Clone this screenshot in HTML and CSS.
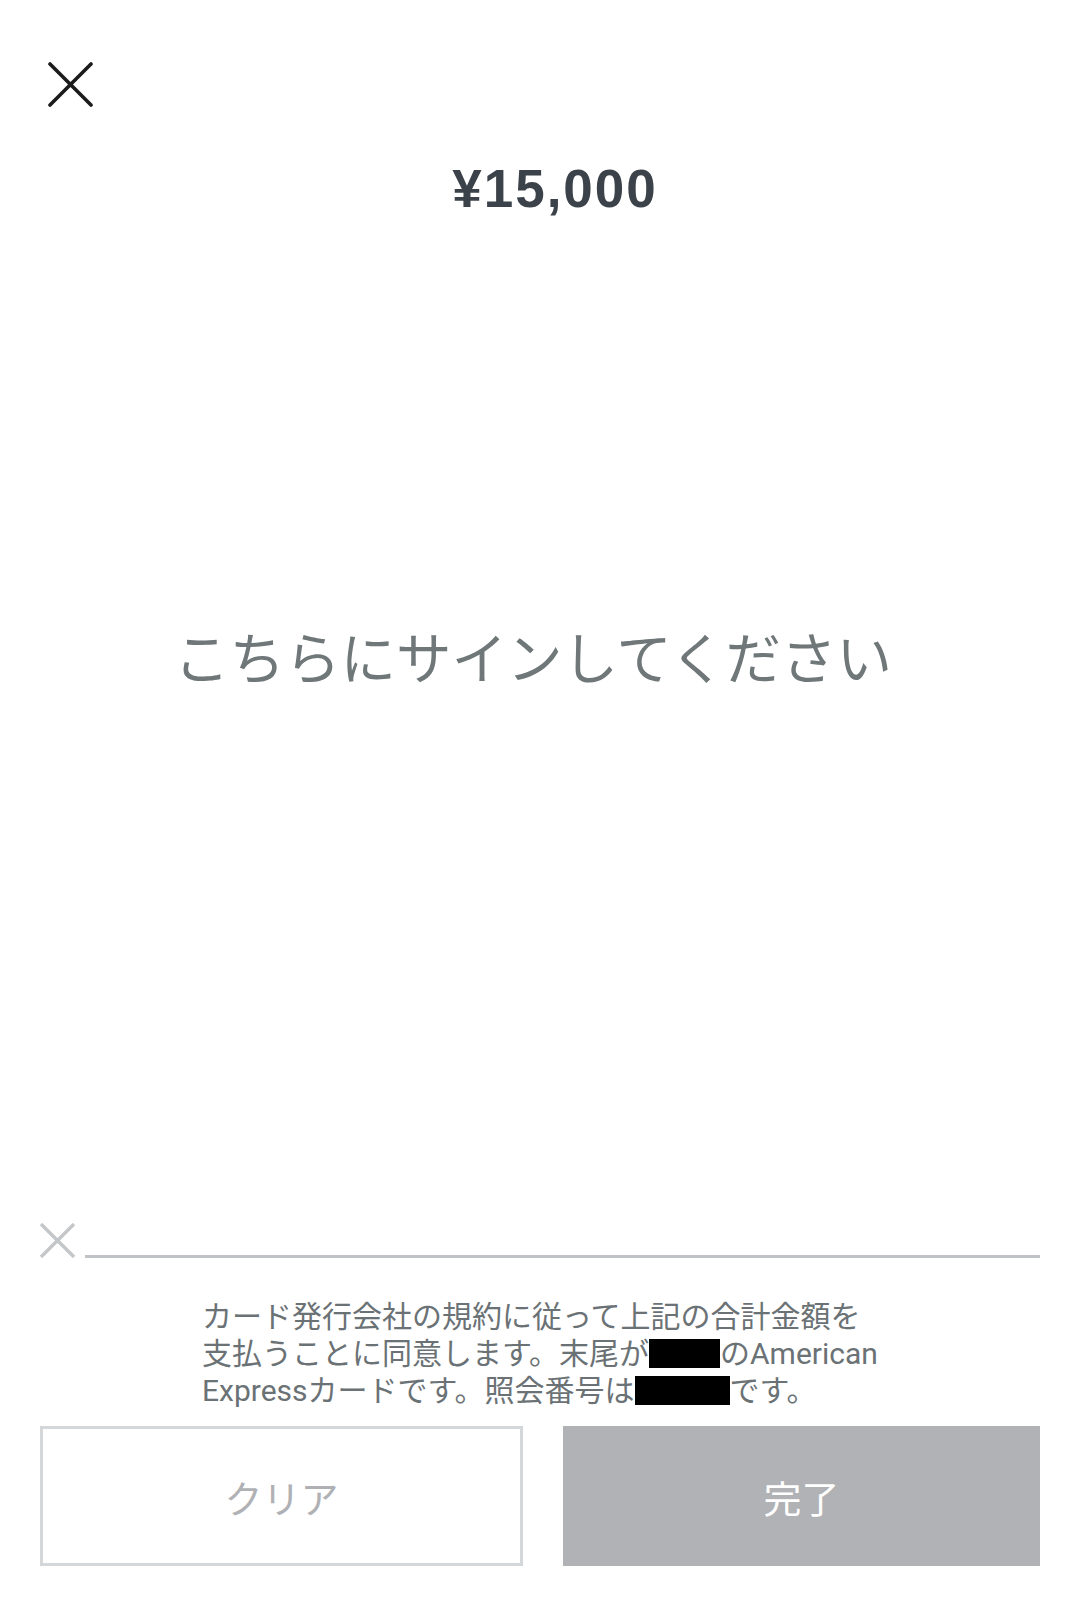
FILE: index.html
```html
<!DOCTYPE html>
<html lang="ja">
<head>
<meta charset="utf-8">
<title>サイン</title>
<link rel="stylesheet" href="styles.css">
</head>
<body>
<div class="page">
  <header class="header">
    <button class="close" aria-label="閉じる">
      <svg width="45" height="45" viewBox="0 0 45 45"><path d="M2 2 L43 43 M43 2 L2 43" stroke="#1b1b1b" stroke-width="3.6" stroke-linecap="round" fill="none"/></svg>
    </button>
  </header>
  <div class="amount">¥15,000</div>
  <div class="sign-area">
    <div class="sign-hint">こちらにサインしてください</div>
  </div>
  <div class="sig-row">
    <svg class="sig-x" width="35" height="35" viewBox="0 0 35 35"><path d="M1 1 L34 34 M34 1 L1 34" stroke="#c4c7ca" stroke-width="3.4" fill="none"/></svg>
    <div class="sig-line"></div>
  </div>
  <div class="terms">
    <span class="tl">カード発行会社の規約に従って上記の合計金額を</span>
    <span class="tl">支払うことに同意します。末尾が<span class="mask m1"></span>のAmerican</span>
    <span class="tl">Expressカードです。照会番号は<span class="mask m2"></span>です。</span>
  </div>
  <div class="actions">
    <button class="btn btn-clear">クリア</button>
    <button class="btn btn-done">完了</button>
  </div>
</div>
</body>
</html>
```
FILE: styles.css
```css
html, body {
  margin: 0;
  padding: 0;
  background: #ffffff;
}
body {
  font-family: Roboto, "Noto Sans CJK JP", sans-serif;
}
.page {
  width: 1080px;
  height: 1607px;
  display: flex;
  flex-direction: column;
  box-sizing: border-box;
  padding-bottom: 41px;
}
.header {
  padding: 62px 0 0 48px;
  height: 45px;
}
.close {
  border: 0;
  background: none;
  padding: 0;
  width: 45px;
  height: 45px;
  display: block;
}
.close svg { display: block; }
.amount {
  margin-top: 56px;
  padding-left: 30px;
  text-align: center;
  font-family: "Liberation Sans", Arial, sans-serif;
  font-weight: 700;
  font-size: 53px;
  line-height: 52px;
  letter-spacing: 2px;
  color: #3c4249;
}
.sign-area {
  flex: 1;
  display: flex;
  align-items: center;
  justify-content: center;
}
.sign-hint {
  font-family: "Noto Sans CJK JP", sans-serif;
  font-size: 55.5px;
  line-height: 1;
  color: #6f7779;
  margin-left: -14px;
  margin-top: -126px;
}
.sig-row {
  display: flex;
  align-items: flex-end;
  padding: 0 40px;
  height: 35px;
}
.sig-x { display: block; flex: none; }
.sig-line {
  flex: 1;
  height: 3px;
  margin-left: 10px;
  background: #bfc3c7;
}
.terms {
  margin-top: 40px;
  align-self: center;
  padding-left: 12px;
  box-sizing: border-box;
  width: 700px;
  font-family: Roboto, "Noto Sans CJK JP", sans-serif;
  font-size: 30px;
  line-height: 37px;
  color: #6b7275;
}
.tl {
  display: block;
  white-space: nowrap;
}
.mask {
  display: inline-block;
  background: #000000;
  height: 29px;
  vertical-align: -4px;
}
.m1 { width: 71px; }
.m2 { width: 95px; }
.actions {
  margin-top: 17px;
  display: flex;
  gap: 40px;
  padding: 0 40px;
}
.btn {
  flex: 1;
  height: 140px;
  font-family: "Noto Sans CJK JP", sans-serif;
  font-size: 38px;
  margin: 0;
  padding: 0;
  box-sizing: border-box;
}
.btn-clear {
  background: #ffffff;
  border: 3px solid #d3d7da;
  color: #b0b1b4;
}
.btn-done {
  background: #b1b2b5;
  border: 0;
  color: #ffffff;
}
```
